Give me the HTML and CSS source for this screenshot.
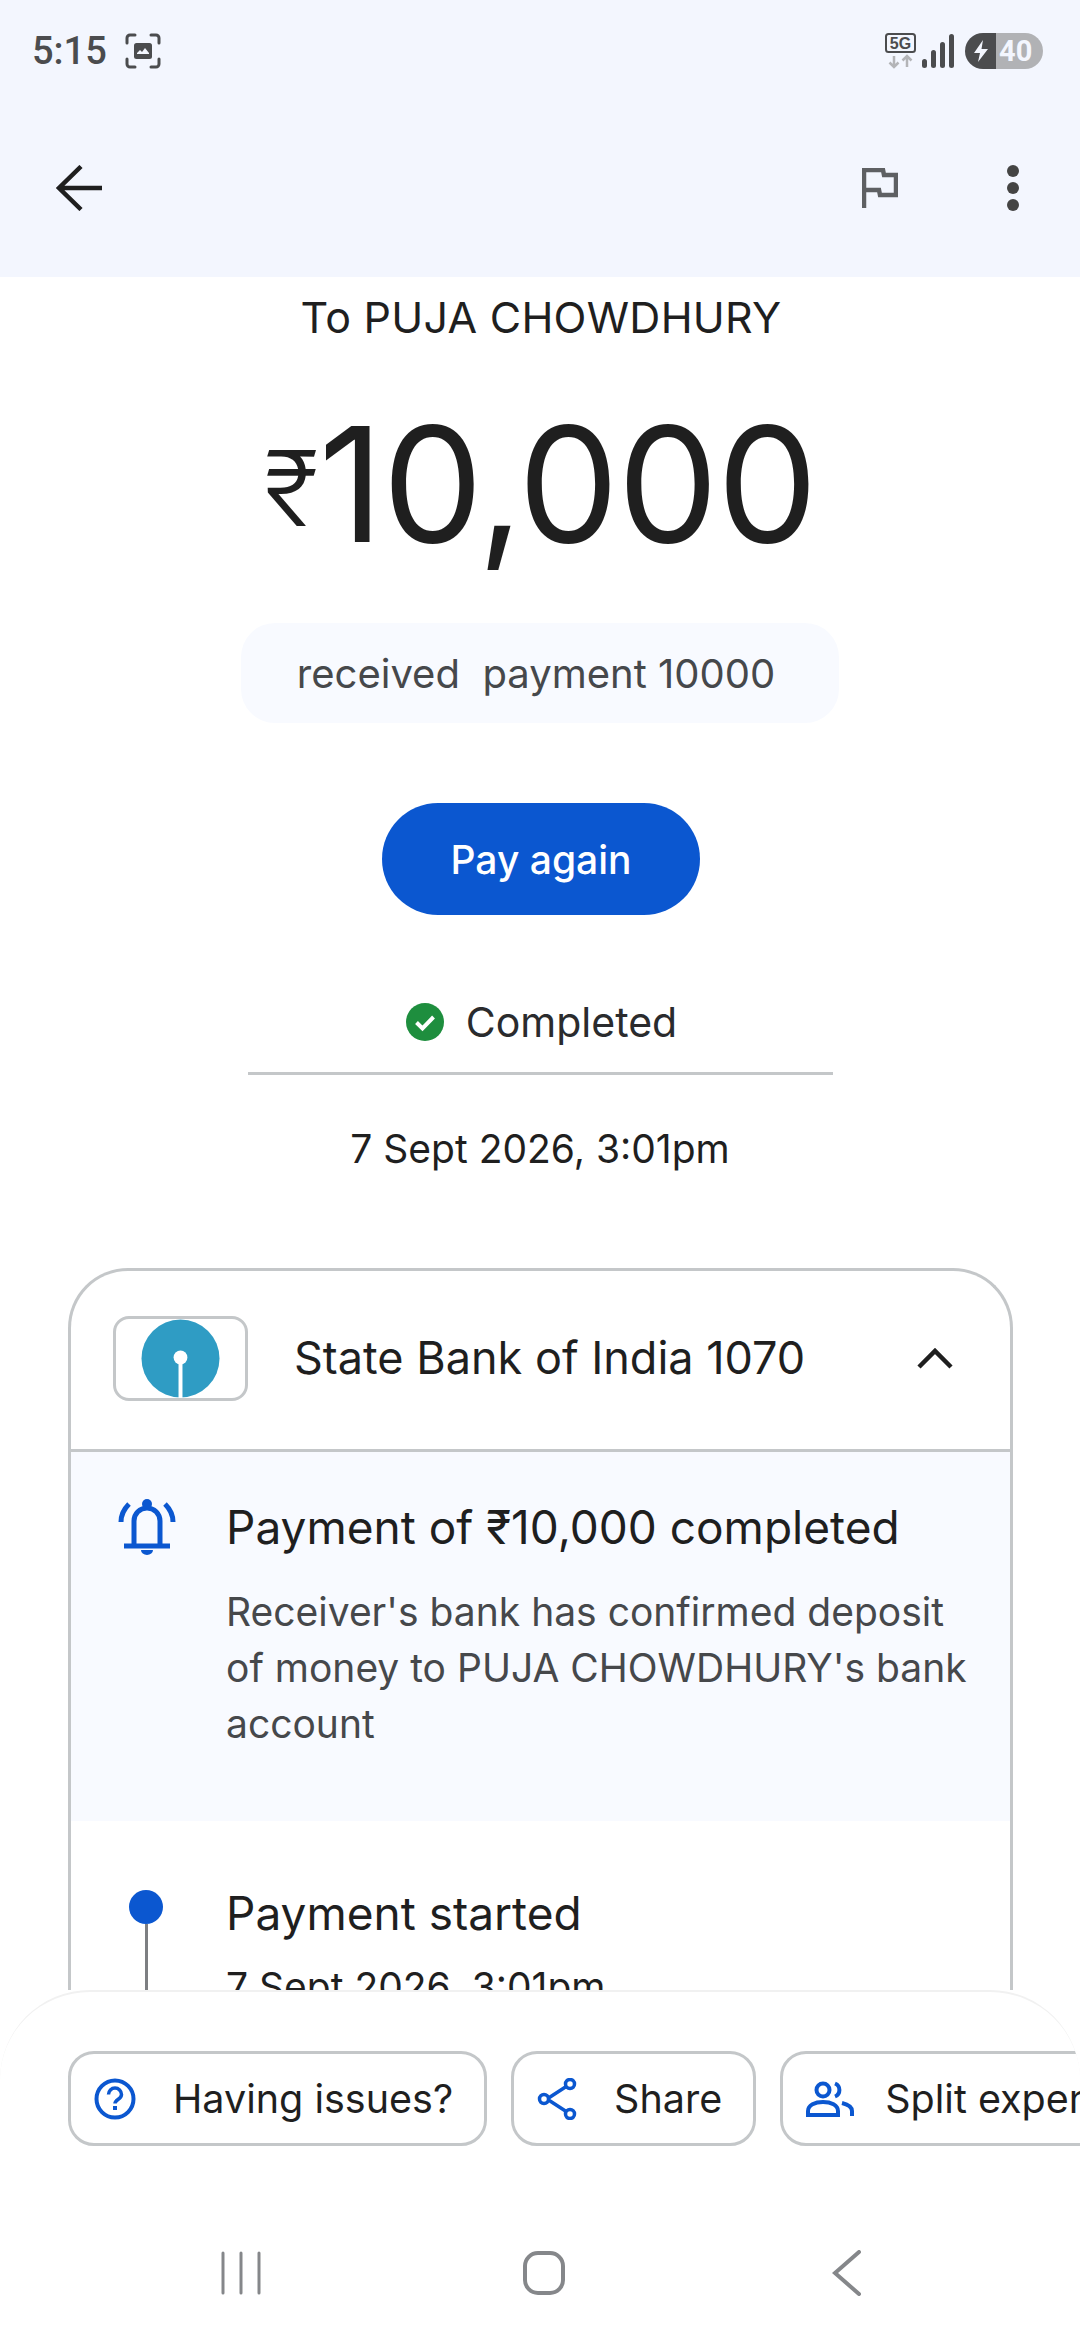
FILE: index.html
```html
<!DOCTYPE html>
<html lang="en">
<head>
<meta charset="utf-8">
<title>Payment details</title>
<link rel="stylesheet" href="styles.css">
</head>
<body>
<div class="page">
  <header class="top">
    <div class="status">
      <div class="status-left">
        <span class="time">5:15</span>
        <svg class="shot" viewBox="0 0 36 36" width="36" height="36"><path d="M2 10V5a3 3 0 0 1 3-3h5M26 2h5a3 3 0 0 1 3 3v5M34 26v5a3 3 0 0 1-3 3h-5M10 34H5a3 3 0 0 1-3-3v-5" fill="none" stroke="#4b4c4e" stroke-width="3" stroke-linecap="round"/><rect x="9" y="10" width="18" height="16" rx="2.500" fill="#4b4c4e"/><path d="M12 20l3-3 2 2 3-4 4 5v1H12z" fill="#f3f6fe"/></svg>
      </div>
      <div class="status-right">
        <svg class="net" viewBox="0 0 32 36" width="32" height="36"><rect x="1" y="1" width="29" height="18" rx="2.500" fill="none" stroke="#4b4c4e" stroke-width="2"/><text x="15.500" y="16" text-anchor="middle" class="net-text">5G</text><path d="M9 23v11M4.500 29.500L9 34l4.500-4.500M22 34V23M17.500 27.500L22 23l4.500 4.500" fill="none" stroke="#b3b4b7" stroke-width="2.500"/></svg>
        <svg class="signal" viewBox="0 0 32 36" width="32" height="36"><g fill="#4b4c4e"><rect x="0" y="26" width="5" height="9" rx="2.500"/><rect x="9" y="17" width="5" height="18" rx="2.500"/><rect x="18" y="9" width="5" height="26" rx="2.500"/><rect x="27" y="1" width="5" height="34" rx="2.500"/></g></svg>
        <div class="battery">
          <span class="battery-fill"><svg viewBox="0 0 16 22" width="16" height="22"><path d="M10 0L1 13h6l-2 9 10-13H8.500z" fill="#f3f6fe"/></svg></span>
          <span class="battery-level">40</span>
        </div>
      </div>
    </div>
    <div class="toolbar">
      <svg class="back" viewBox="0 0 48 46" width="48" height="46"><path d="M47 23H7M26 1.500L4 23l22 21.500" fill="none" stroke="#1f1f1f" stroke-width="4.500"/></svg>
      <div class="tool-right">
        <svg class="flag" viewBox="0 0 36 40" width="36" height="40"><path d="M2 40V2h19l1 5h12v20H18l-1-5H2" fill="none" stroke="#5e6063" stroke-width="4.500"/></svg>
        <svg class="more" viewBox="0 0 12 46" width="12" height="46"><g fill="#444"><circle cx="6" cy="6" r="6"/><circle cx="6" cy="23" r="6"/><circle cx="6" cy="40" r="6"/></g></svg>
      </div>
    </div>
  </header>

  <main class="content">
    <h1 class="recipient">To PUJA CHOWDHURY</h1>
    <div class="amount"><span class="rupee">₹</span>10,000</div>
    <div class="note">received&nbsp; payment 10000</div>
    <button class="pay">Pay again</button>
    <div class="state">
      <svg viewBox="0 0 38 38" width="38" height="38"><circle cx="19" cy="19" r="19" fill="#1e8e3e"/><path d="M10.500 19.500l6 6 11-11.500" fill="none" stroke="#fff" stroke-width="4"/></svg>
      <span>Completed</span>
    </div>
    <div class="rule"></div>
    <div class="date">7 Sept 2026, 3:01pm</div>

    <section class="card">
      <div class="bank">
        <div class="logo">
          <svg viewBox="0 0 80 80" width="79" height="79"><circle cx="40" cy="40" r="39.500" fill="#2f9cc4"/><circle cx="40" cy="39" r="7" fill="#fff"/><rect x="38" y="40" width="4" height="40" fill="#fff"/></svg>
        </div>
        <span class="bank-name">State Bank of India 1070</span>
        <svg class="chev" viewBox="0 0 36 22" width="36" height="22"><path d="M2 20L18 4l16 16" fill="none" stroke="#1f1f1f" stroke-width="4.500"/></svg>
      </div>
      <div class="alert">
        <svg class="bell" viewBox="0 0 58 56" width="58" height="56"><g fill="none" stroke="#0b57d0" stroke-width="5"><path d="M16 45V22a13 13 0 0 1 26 0v23"/><path d="M6 47h46"/><path d="M3 23c0-7 3-13 8-18M55 23c0-7-3-13-8-18"/></g><circle cx="29" cy="5" r="5" fill="#0b57d0"/><path d="M23 51h12a6 5 0 0 1-12 0z" fill="#0b57d0"/></svg>
        <div class="alert-body">
          <h2 class="line-title">Payment of ₹10,000 completed</h2>
          <p class="alert-text">Receiver's bank has confirmed deposit of money to PUJA CHOWDHURY's bank account</p>
        </div>
      </div>
      <div class="step">
        <div class="track"><span class="dot"></span><span class="stem"></span></div>
        <div>
          <h2 class="line-title">Payment started</h2>
          <p class="step-date">7 Sept 2026, 3:01pm</p>
        </div>
      </div>
    </section>
  </main>

  <footer class="sheet">
    <div class="chips">
      <div class="chip">
        <svg viewBox="0 0 42 42" width="42" height="42"><circle cx="21" cy="21" r="18.500" fill="none" stroke="#0b57d0" stroke-width="4"/><path d="M14.500 16.500a6.500 6.500 0 0 1 13 0c0 5-6.500 5-6.500 9" fill="none" stroke="#0b57d0" stroke-width="3.500"/><rect x="19" y="28" width="4" height="4" fill="#0b57d0"/></svg>
        <span>Having issues?</span>
      </div>
      <div class="chip">
        <svg viewBox="0 0 40 42" width="40" height="42"><g fill="none" stroke="#0b57d0" stroke-width="3.500"><path d="M10 21L30 8M10 21l20 13"/><circle cx="7" cy="21" r="4.500" fill="#fff"/><circle cx="33" cy="6" r="4.500" fill="#fff"/><circle cx="33" cy="36" r="4.500" fill="#fff"/></g></svg>
        <span>Share</span>
      </div>
      <div class="chip chip-tight">
        <svg viewBox="0 0 48 36" width="48" height="36"><g fill="none" stroke="#0b57d0" stroke-width="4"><circle cx="17" cy="9" r="6.500"/><path d="M2 34v-4c0-6 7-9 15-9s15 3 15 9v4z"/><path d="M29 2.500a7 7 0 0 1 0 13M36 22c6 1.500 10 4 10 8v5"/></g></svg>
        <span>Split expenses</span>
      </div>
    </div>
    <nav class="nav">
      <svg viewBox="0 0 42 44" width="42" height="44"><path d="M3 2v40M21 2v40M39 2v40" stroke="#85878a" stroke-width="3" stroke-linecap="round" fill="none"/></svg>
      <svg viewBox="0 0 44 46" width="44" height="46"><rect x="3" y="3" width="38" height="40" rx="13" fill="none" stroke="#85878a" stroke-width="4"/></svg>
      <svg viewBox="0 0 30 46" width="30" height="46"><path d="M27 2L3 23l24 21" fill="none" stroke="#85878a" stroke-width="4" stroke-linecap="round"/></svg>
    </nav>
  </footer>
</div>
</body>
</html>
```

FILE: styles.css
```css
* { box-sizing: border-box; }
html, body { margin: 0; padding: 0; background: #fff; }
body { font-family: Inter, Roboto, "Noto Sans", sans-serif; color: #1f1f1f; }
h1, h2, p { margin: 0; font-weight: 400; }

.page { width: 1080px; height: 2340px; display: flex; flex-direction: column; overflow: hidden; }

.top { height: 277px; flex: none; background: #f3f6fe; }
.status { height: 100px; padding: 33px 37px 0 32px; display: flex; justify-content: space-between; align-items: flex-start; }
.status-left { display: flex; align-items: center; gap: 18px; }
.time { font-size: 38px; line-height: 36px; font-weight: 500; color: #4b4c4e; font-family: Roboto, sans-serif; }
.status-right { display: flex; align-items: center; gap: 5px; }
.net-text { font: 700 16px "Liberation Sans", sans-serif; fill: #4b4c4e; }
.battery { display: flex; width: 78px; height: 36px; border-radius: 18px; overflow: hidden; margin-left: 6px; }
.battery-fill { width: 31px; background: #4b4c4e; display: flex; align-items: center; justify-content: center; }
.battery-level { flex: 1; background: #b1b2b5; color: #f3f6fe; font: 700 29px/36px Roboto, sans-serif; padding-left: 3px; }
.toolbar { height: 177px; padding: 0 61px 0 55px; display: flex; justify-content: space-between; align-items: flex-start; }
.back { margin-top: 65px; }
.tool-right { display: flex; align-items: flex-start; gap: 109px; margin-top: 65px; }
.flag { display: block; margin-top: 3px; }
.more { display: block; }

.content { height: 1713px; flex: none; overflow: hidden; display: flex; flex-direction: column; align-items: center; }
.content > * { flex: none; }
.recipient { font-size: 43px; line-height: 50px; margin-top: 15px; letter-spacing: 0.25px; color: #1f1f1f; margin-left: 2px; }
.amount { font-size: 160px; line-height: 180px; margin-top: 52px; color: #1f1f1f; letter-spacing: -1.500px; font-weight: 400; margin-left: 1px; }
.rupee { font-size: 104px; vertical-align: 16px; letter-spacing: 0; font-weight: 300; }
.note { width: 598px; height: 100px; margin-top: 45px; background: #f8faff; border-radius: 34px; font-size: 40px; line-height: 102px; text-align: center; color: #46484b; padding-right: 8px; }
.pay { width: 318px; height: 112px; margin-top: 80px; margin-left: 2px; border: 0; border-radius: 56px; background: #0b57d0; color: #fff; font: 500 39px Inter, Roboto, sans-serif; }
.state { display: flex; align-items: center; gap: 22px; margin-top: 82px; font-size: 41px; line-height: 50px; color: #2a2b2d; height: 50px; margin-left: 3px; }
.rule { width: 585px; height: 3px; background: #c4c7c9; margin-top: 25px; margin-left: 0; }
.date { font-size: 39px; line-height: 48px; margin-top: 50px; margin-left: 0; color: #1f1f1f; }

.card { align-self: flex-start; width: 945px; margin: 95px 0 0 68px; border: 3px solid #c4c7c9; border-bottom: 0; border-radius: 60px 60px 0 0; }
.bank { height: 174px; padding: 0 57px 4px 42px; display: flex; align-items: center; border-bottom: 3px solid #c4c7c9; box-sizing: content-box; }
.logo { width: 135px; height: 85px; border: 3px solid #c4c7c9; border-radius: 16px; display: flex; justify-content: center; align-items: center; overflow: hidden; }
.bank-name { font-size: 45px; line-height: 54px; margin-left: 46px; flex: 1; color: #1f1f1f; }
.alert { height: 369px; background: #f8faff; display: flex; padding: 47px 40px 0 47px; gap: 50px; align-items: flex-start; }
.bell { flex: none; }
.line-title { font-size: 46px; line-height: 56px; color: #1f1f1f; }
.alert-text { font-size: 39px; line-height: 56px; margin-top: 29px; color: #46484b; }
.step { padding: 64px 40px 0 58px; display: flex; gap: 63px; }
.track { width: 34px; display: flex; flex-direction: column; align-items: center; margin-top: 5px; }
.dot { width: 34px; height: 34px; border-radius: 50%; background: #0b57d0; flex: none; }
.stem { width: 3px; height: 120px; background: #7d7f82; }
.step-date { font-size: 39px; line-height: 48px; margin-top: 22px; color: #1f1f1f; }

.sheet { flex: 1; background: #fff; border-top: 2px solid #f1f1f1; border-radius: 90px 90px 0 0; overflow: hidden; }
.chips { display: flex; gap: 24px; padding: 59px 0 0 68px; width: 1080px; }
.chip { flex: none; height: 95px; padding: 0 31px 0 23px; display: flex; align-items: center; gap: 37px; border: 3px solid #c4c7c9; border-radius: 26px; font-size: 39.500px; color: #1f1f1f; background: #fff; white-space: nowrap; }
.chip-tight { gap: 31px; }
.nav { display: flex; padding: 104px 0 0 220px; align-items: center; }
.nav svg:nth-child(2) { margin-left: 260px; }
.nav svg:nth-child(3) { margin-left: 266px; }
```
